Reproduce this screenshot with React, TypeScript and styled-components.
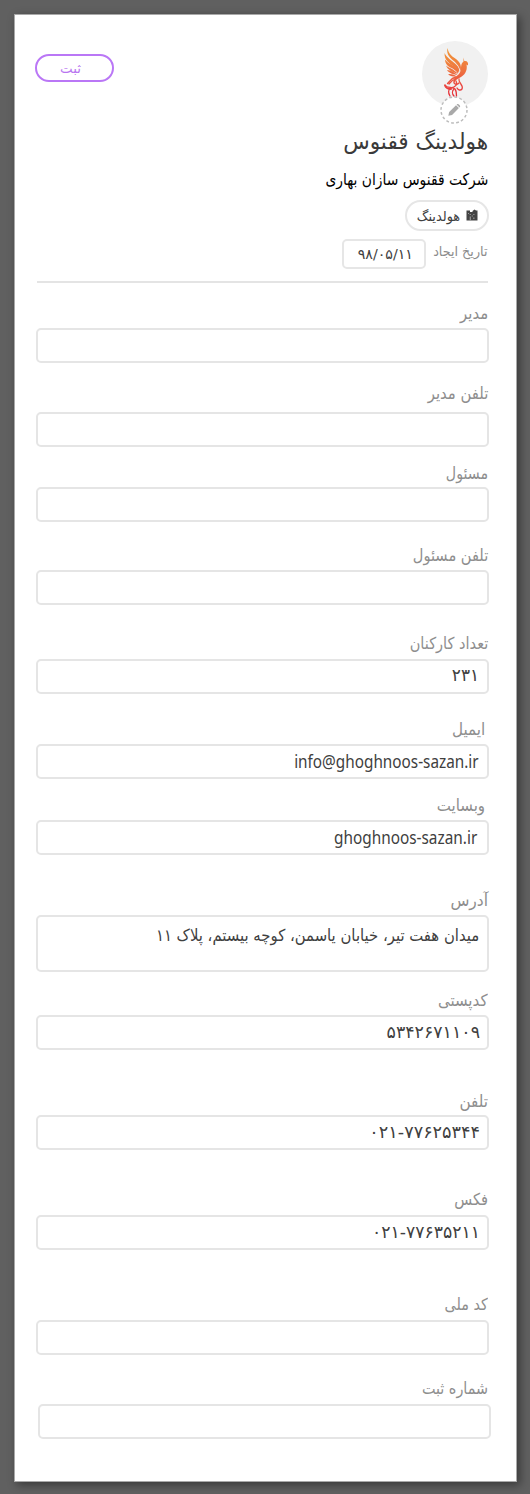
import React from 'react';
import styled, { createGlobalStyle, css } from 'styled-components';

const GlobalStyle = createGlobalStyle`
  *, *::before, *::after { box-sizing: border-box; }
  html { background: #606060; }
  body {
    margin: 0;
    font-family: "DejaVu Sans", sans-serif;
    -webkit-font-smoothing: antialiased;
  }
`;

const Page = styled.div`
  display: flex;
  width: 530px;
  height: 1494px;
  padding: 14px 13px 12px 14px;
  background: #606060;
`;

const Card = styled.main`
  direction: rtl;
  flex: 1;
  display: flex;
  flex-direction: column;
  padding: 26px 27px 0 21px;
  background: #fff;
  border: 1px solid #a9a9a9;
  box-shadow: 3px 3px 9px rgba(0, 0, 0, 0.42);
`;

const Header = styled.header`
  display: flex;
  justify-content: space-between;
  align-items: flex-start;
  height: 242px;
  margin: 0 1px;
  border-bottom: 2px solid #e4e4e4;
`;

const Profile = styled.section`
  display: flex;
  flex-direction: column;
  align-items: flex-start;
`;

const Avatar = styled.div`
  position: relative;
  display: flex;
  justify-content: center;
  width: 66px;
  height: 66px;
  border-radius: 50%;
  background: #f1f1f1;
`;

const EditBadge = styled.button`
  position: absolute;
  left: 18px;
  top: 55px;
  width: 28px;
  height: 28px;
  padding: 0;
  border: 0;
  background: none;
`;

/* Horizontally condensed run of text, anchored to its right edge. */
const Condensed = styled.span<{ $scale?: number }>`
  display: inline-block;
  white-space: nowrap;
  transform: scaleX(${(p) => p.$scale ?? 1});
  transform-origin: right center;
`;

const Title = styled.h1`
  margin: 20px 0 0;
  font-size: 22px;
  font-weight: 400;
  line-height: 30px;
  color: #3a3a3a;
`;

const Subtitle = styled.h2`
  margin: 11px 0 0;
  font-size: 16px;
  font-weight: 400;
  line-height: 24px;
  color: #000;
`;

const Tag = styled.div`
  display: flex;
  align-items: center;
  gap: 6px;
  width: 84px;
  height: 31px;
  margin: 8px -1px 0 0;
  padding-right: 9px;
  border: 2px solid #e6e6e6;
  border-radius: 16px;
  font-size: 13.5px;
  line-height: 27px;
  color: #404040;
`;

const TagLabel = styled.span`
  padding-top: 2px;
`;

const DateRow = styled.div`
  display: flex;
  align-items: flex-start;
  justify-content: space-between;
  width: 146px;
  margin-top: 8px;
`;

const DateLabel = styled.span`
  width: 56px;
  padding-top: 1px;
  font-size: 13.5px;
  line-height: 23px;
  color: #8c8c8c;
`;

const DateBox = styled.div`
  direction: ltr;
  width: 84px;
  height: 30px;
  padding-right: 11px;
  border: 2px solid #e6e6e6;
  border-radius: 5px;
  text-align: right;
  font-size: 14.2px;
  line-height: 26px;
  color: #404040;
`;

const SaveButton = styled.button`
  width: 79px;
  height: 28px;
  margin: 13px 0 0 -2px;
  padding: 2px 8px 0 0;
  border: 2px solid #ba77f6;
  border-radius: 14px;
  background: #fff;
  font: 13.4px/22px "DejaVu Sans", sans-serif;
  color: #b875f0;
  text-align: center;
`;

const Field = styled.div<{ $before: number }>`
  display: flex;
  flex-direction: column;
  margin-top: ${(p) => p.$before}px;
`;

const Label = styled.label<{ $inset: number; $gap: number }>`
  height: 24px;
  margin-bottom: ${(p) => p.$gap}px;
  padding: 1px ${(p) => p.$inset}px 0 0;
  font-size: 16.5px;
  line-height: 24px;
  color: #8e8e8e;
`;

type BoxProps = {
  $tall?: boolean;
  $top?: number;
  $inset?: number;
  $ltr?: boolean;
  $latin?: boolean;
  $shift?: number;
};

const Box = styled.div<BoxProps>`
  direction: ${(p) => (p.$ltr ? 'ltr' : 'rtl')};
  height: ${(p) => (p.$tall ? 57 : 35)}px;
  padding: ${(p) => p.$top ?? 0}px ${(p) => p.$inset ?? 8}px 0;
  margin: 0 ${(p) => -(p.$shift ?? 0)}px 0 ${(p) => p.$shift ?? 0}px;
  border: 2px solid #e5e5e5;
  border-radius: 5px;
  text-align: right;
  font-size: ${(p) => (p.$tall ? 16.5 : 17.4)}px;
  line-height: 24px;
  color: #404040;
  ${(p) =>
    p.$latin &&
    css`
      font-family: "Noto Sans", sans-serif;
      font-size: 17.4px;
    `}
`;

type FieldSpec = {
  label: string;
  before: number;
  gap: number;
  scale?: number;
  labelInset?: number;
  value?: string;
  valueScale?: number;
  top?: number;
  inset?: number;
  ltr?: boolean;
  latin?: boolean;
  tall?: boolean;
  shift?: number;
};

const fields: FieldSpec[] = [
  { label: 'مدیر', before: 18, gap: 3, scale: 0.9 },
  { label: 'تلفن مدیر', before: 18, gap: 7, scale: 0.9 },
  { label: 'مسئول', before: 14, gap: 2, scale: 0.86 },
  { label: 'تلفن مسئول', before: 21, gap: 3, scale: 0.885 },
  { label: 'تعداد کارکنان', before: 26, gap: 4, scale: 0.88, value: '۲۳۱', valueScale: 0.97, top: 2, ltr: true },
  { label: 'ایمیل', before: 23, gap: 3, scale: 0.92, labelInset: 4, value: 'info@ghoghnoos-sazan.ir', valueScale: 0.88, top: 3, ltr: true, latin: true },
  { label: 'وبسایت', before: 14, gap: 3, scale: 0.91, labelInset: 4, value: 'ghoghnoos-sazan.ir', valueScale: 0.883, top: 3, inset: 10, ltr: true, latin: true },
  { label: 'آدرس', before: 33, gap: 3, scale: 0.94, value: 'میدان هفت تیر، خیابان یاسمن، کوچه بیستم، پلاک ۱۱', valueScale: 0.9, top: 7, inset: 8, tall: true },
  { label: 'کدپستی', before: 16, gap: 3, scale: 0.91, value: '۵۳۴۲۶۷۱۱۰۹', top: 3, inset: 7, ltr: true },
  { label: 'تلفن', before: 39, gap: 2, scale: 0.92, value: '۰۲۱-۷۷۶۲۵۳۴۴', valueScale: 1.015, top: 3, inset: 7, ltr: true },
  { label: 'فکس', before: 37, gap: 4, scale: 0.89, value: '۰۲۱-۷۷۶۳۵۲۱۱', valueScale: 0.99, top: 3, inset: 7, ltr: true },
  { label: 'کد ملی', before: 42, gap: 4, scale: 0.87 },
  { label: 'شماره ثبت', before: 21, gap: 4, scale: 0.87, shift: 2 },
];

const PhoenixMark = styled.svg`
  width: 28px;
  height: 52px;
  margin: 6px 0 0 1px;
`;

const Phoenix = () => (
  <PhoenixMark viewBox="0 0 28 52" fill="none">
    <defs>
      <linearGradient id="flame" x1="0" y1="0" x2="0" y2="52" gradientUnits="userSpaceOnUse">
        <stop offset="0" stopColor="#f29a36" />
        <stop offset="0.45" stopColor="#ee7440" />
        <stop offset="0.75" stopColor="#ea4540" />
        <stop offset="1" stopColor="#e32636" />
      </linearGradient>
    </defs>
    <g fill="url(#flame)">
      <path d="M5.500 1C6.500 6 9 9 14 12C18 15 20 19 18.500 24C17 18 13 15 9.500 12C6 9 4.500 5 5.500 1Z" />
      <path d="M2.500 6C5 11 9 13 13 16.500C16 19 18 22 17 25.500C14 20 9 18 6 15C3.500 12.500 2.500 10 2.500 6Z" />
      <path d="M3 12.500C6 16.500 10 17.500 13 20C16 22 17 24 16 26.500C13 22 9 21 6 19C4 17 3 15 3 12.500Z" />
      <path d="M4 18.500C7 21 12 22 16 27C11 25 6 23.500 4 18.500Z" />
      <path d="M5 23C9 23.500 12 25 15.500 28C11 27 7 26.500 5 23Z" />
      <path d="M6 27C10 26.500 13 28 15 29.500C11 29.500 8 29.500 6 27Z" />
      <path d="M21.500 10.500L22.300 14C25 13.500 26.500 15 26 18.500L24.500 17.500C25.500 22 24 27 19 30C16 31.500 13 33 12 36C11 33 14 29 16.500 27.500C20.500 24 17.500 17 21.500 14.500Z" />
    </g>
    <g stroke="url(#flame)" strokeWidth="1.300" strokeLinecap="round">
      <path d="M14 30C9 31 8 34 5.500 36.500M13 32C9 34 8 36 7 37M13 33C10 36 14 39 17 36" />
      <path d="M14 34C16 38 13 40 9 41C6 42 6 46 8 49M12 42C10 44 10 47 12 49" />
      <path d="M17 32C16 36 22 38 20 42C18.500 44 16 43 15 41M3 38C5 42 10 39 13 42C14.500 44 14.500 46 14.500 49" />
      <path d="M3 38.500C4 41.500 6 42 9 42" strokeWidth="1.900" />
    </g>
  </PhoenixMark>
);

const EditIcon = () => (
  <svg width="28" height="28" viewBox="0 0 28 28">
    <circle cx="14" cy="14" r="13" fill="#fff" stroke="#bdbdbd" strokeWidth="1.500" strokeDasharray="2.800 2.300" />
    <path d="M8.300 19.800L9.200 16L16 9.200L18.900 12.100L12.100 18.900Z" fill="#a9a9a9" />
    <path d="M16.600 8.600L17.300 8C18.300 7.400 20.600 9.700 20.100 10.800L19.500 11.500Z" fill="#a9a9a9" />
  </svg>
);

const BuildingGlyph = styled.svg`
  width: 12px;
  height: 12px;
  margin-bottom: 1px;
`;

const BuildingIcon = () => (
  <BuildingGlyph viewBox="0 0 12 12">
    <path d="M0.500 1.500H4V3H6.500V2L8.500 0.500L10 1.500H11.500V11.500H0.500Z" fill="#444" />
    <path d="M3.800 5H4.600V6H3.800ZM7.500 5H8.300V6H7.500ZM3.800 7.500H4.600V11H3.800ZM5.800 6.500H6.600V7.500H5.800ZM7.500 8.500H8.300V10H7.500ZM2 4H2.700V5H2Z" fill="#c0c0c0" />
  </BuildingGlyph>
);

export default function App() {
  return (
    <>
      <GlobalStyle />
      <Page>
        <Card>
          <Header>
            <Profile>
              <Avatar>
                <Phoenix />
                <EditBadge aria-label="ویرایش">
                  <EditIcon />
                </EditBadge>
              </Avatar>
              <Title>
                <Condensed $scale={0.985}>هولدینگ ققنوس</Condensed>
              </Title>
              <Subtitle>
                <Condensed $scale={0.865}>شرکت ققنوس سازان بهاری</Condensed>
              </Subtitle>
              <Tag>
                <BuildingIcon />
                <TagLabel>
                  <Condensed $scale={0.96}>هولدینگ</Condensed>
                </TagLabel>
              </Tag>
              <DateRow>
                <DateLabel>
                  <Condensed $scale={0.945}>تاریخ ایجاد</Condensed>
                </DateLabel>
                <DateBox>۹۸/۰۵/۱۱</DateBox>
              </DateRow>
            </Profile>
            <SaveButton>ثبت</SaveButton>
          </Header>
          {fields.map((f) => (
            <Field key={f.label} $before={f.before}>
              <Label $inset={f.labelInset ?? 1} $gap={f.gap}>
                <Condensed $scale={f.scale}>{f.label}</Condensed>
              </Label>
              <Box $tall={f.tall} $top={f.top} $inset={f.inset} $ltr={f.ltr} $latin={f.latin} $shift={f.shift}>
                {f.value && <Condensed $scale={f.valueScale}>{f.value}</Condensed>}
              </Box>
            </Field>
          ))}
        </Card>
      </Page>
    </>
  );
}
